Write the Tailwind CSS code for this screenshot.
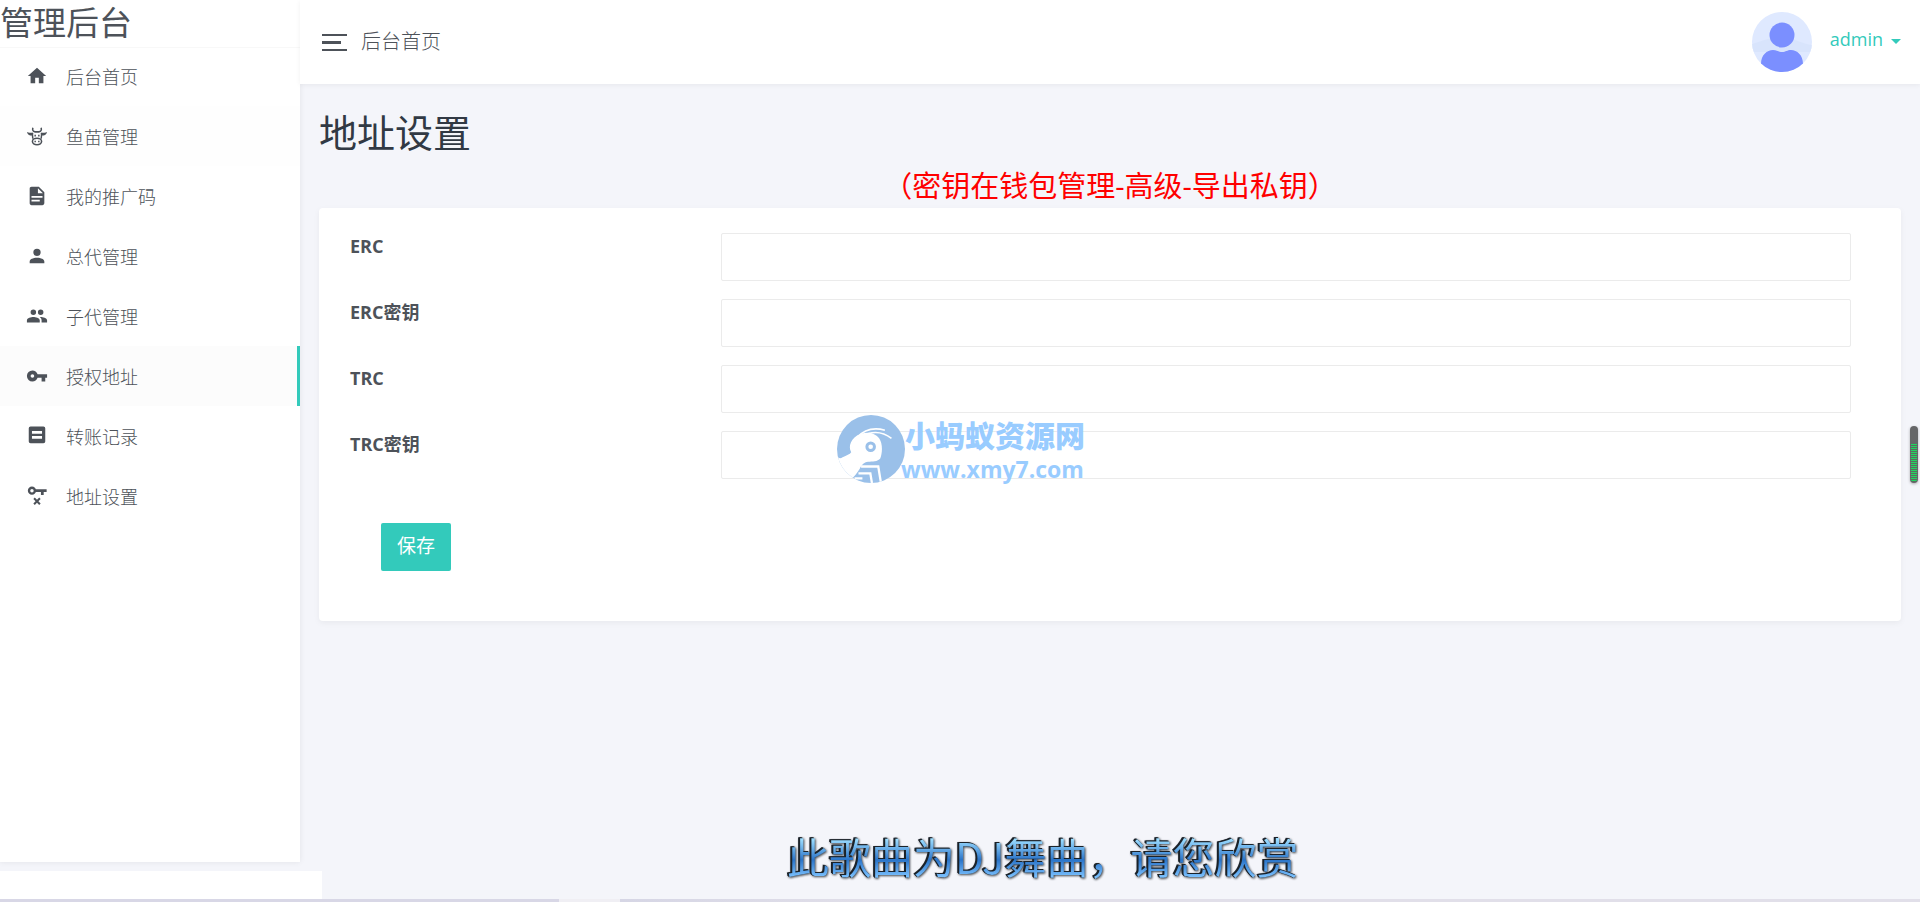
<!DOCTYPE html>
<html lang="zh-CN">
<head>
    <meta charset="UTF-8">
    <meta name="viewport" content="width=device-width, initial-scale=1.0">
    <title>地址设置 - 管理后台</title>
    <script src="https://cdn.jsdelivr.net/npm/@tailwindcss/browser@4"></script>
</head>
<body class="flex h-screen overflow-hidden bg-[#f4f5fa] font-['Open_Sans','Noto_Sans_CJK_SC',sans-serif] text-lg font-light text-[#4d5259]">

    <!-- 侧边栏 -->
    <aside class="mb-10 w-[300px] shrink-0 bg-white shadow-[0_0_6px_rgba(0,0,0,0.08)]">
        <div class="h-12 border-b border-[#f8f8f8] text-[33px] leading-[46px] font-normal">管理后台</div>
        <nav class="-mt-0.5">
            <a href="#" class="flex h-15 items-center gap-[18px] pl-[26px]">
                <svg class="size-[22px]" viewBox="0 0 24 24" fill="currentColor"><path d="M10,20V14H14V20H19V12H22L12,3L2,12H5V20H10Z"/></svg>
                <span class="pt-0.5">后台首页</span>
            </a>
            <a href="#" class="flex h-15 items-center gap-[18px] bg-[#fefefe] pl-[26px]">
                <svg class="size-[22px]" viewBox="0 0 24 24" fill="none" stroke="currentColor">
                    <path d="M7.500 3C6.800 5.500 7.500 7 10 7.500H14C16.500 7 17.200 5.500 16.500 3" stroke-width="1.700"/>
                    <path d="M1 7.500C3 8.500 5 8 7.500 8.500L6.500 11.500C3.500 11.500 1.500 10 1 7.500ZM23 7.500C21 8.500 19 8 16.500 8.500L17.500 11.500C20.500 11.500 22.500 10 23 7.500Z" fill="currentColor" stroke="none"/>
                    <path d="M7.200 8.500C6.700 11 7.200 13 7.500 15M16.800 8.500C17.300 11 16.800 13 16.500 15" stroke-width="1.600"/>
                    <ellipse cx="12" cy="18" rx="5" ry="3.500" stroke-width="1.700"/>
                    <path d="M10 10.500V12.500M14 10.500V12.500M10 17.200V18.800M14 17.200V18.800" stroke-width="1.600"/>
                </svg>
                <span class="pt-0.5">鱼苗管理</span>
            </a>
            <a href="#" class="flex h-15 items-center gap-[18px] pl-[26px]">
                <svg class="size-[22px]" viewBox="0 0 24 24" fill="currentColor"><path d="M13,9H18.5L13,3.5V9M6,2H14L20,8V20A2,2 0 0,1 18,22H6C4.89,22 4,21.1 4,20V4C4,2.89 4.89,2 6,2M15,18V16H6V18H15M18,14V12H6V14H18Z"/></svg>
                <span class="pt-0.5">我的推广码</span>
            </a>
            <a href="#" class="flex h-15 items-center gap-[18px] pl-[26px]">
                <svg class="size-[22px]" viewBox="0 0 24 24" fill="currentColor"><path d="M12,4A4,4 0 0,1 16,8A4,4 0 0,1 12,12A4,4 0 0,1 8,8A4,4 0 0,1 12,4M12,14C16.42,14 20,15.79 20,18V20H4V18C4,15.79 7.58,14 12,14Z"/></svg>
                <span class="pt-0.5">总代管理</span>
            </a>
            <a href="#" class="flex h-15 items-center gap-[18px] pl-[26px]">
                <svg class="size-[22px]" viewBox="0 0 24 24" fill="currentColor"><path d="M16,13C15.71,13 15.38,13 15.03,13.05C16.19,13.89 17,15 17,16.5V19H23V16.5C23,14.17 18.33,13 16,13M8,13C5.67,13 1,14.17 1,16.5V19H15V16.5C15,14.17 10.33,13 8,13M8,11A3,3 0 0,0 11,8A3,3 0 0,0 8,5A3,3 0 0,0 5,8A3,3 0 0,0 8,11M16,11A3,3 0 0,0 19,8A3,3 0 0,0 16,5A3,3 0 0,0 13,8A3,3 0 0,0 16,11Z"/></svg>
                <span class="pt-0.5">子代管理</span>
            </a>
            <a href="#" class="flex h-15 items-center gap-[18px] border-r-3 border-[#33cabb] bg-[#fcfcfc] pl-[26px]">
                <svg class="size-[22px]" viewBox="0 0 24 24" fill="currentColor"><path d="M7,14A2,2 0 0,1 5,12A2,2 0 0,1 7,10A2,2 0 0,1 9,12A2,2 0 0,1 7,14M12.65,10C11.83,7.67 9.61,6 7,6A6,6 0 0,0 1,12A6,6 0 0,0 7,18C9.61,18 11.83,16.33 12.65,14H17V18H21V14H23V10H12.65Z"/></svg>
                <span class="pt-0.5">授权地址</span>
            </a>
            <a href="#" class="flex h-15 items-center gap-[18px] pl-[26px]">
                <svg class="size-[22px]" viewBox="0 0 24 24" fill="currentColor" fill-rule="evenodd"><path d="M5 1.500H19A2 2 0 0 1 21 3.500V18A2 2 0 0 1 19 20H5A2 2 0 0 1 3 18V3.500A2 2 0 0 1 5 1.500ZM6.500 6.500V9.500H17.500V6.500ZM6.500 12V15H17.500V12Z"/></svg>
                <span class="pt-0.5">转账记录</span>
            </a>
            <a href="#" class="flex h-15 items-center gap-[18px] pl-[26px]">
                <svg class="size-[22px]" viewBox="0 0 24 24" fill="none" stroke="currentColor">
                    <circle cx="6.500" cy="6.200" r="3.200" stroke-width="2.600"/>
                    <path d="M10 6.200H22.500M17.800 7V11" stroke-width="3"/>
                    <path d="M8.800 14.500L15.200 21M15.200 14.500L8.800 21" stroke-width="2.200"/>
                </svg>
                <span class="pt-0.5">地址设置</span>
            </a>
        </nav>
    </aside>

    <div class="flex min-w-0 flex-1 flex-col">
        <!-- 顶部栏 -->
        <header class="flex h-[84px] shrink-0 items-center justify-between bg-white pr-[19px] pl-[22px] shadow-[0_1px_5px_rgba(0,0,0,0.06)]">
            <div class="flex items-center gap-3.5">
                <button type="button" aria-label="菜单" class="flex w-[25px] flex-col gap-[5px]">
                    <span class="h-0.5 w-full bg-[#4d5259]"></span>
                    <span class="h-[3px] w-[19px] bg-[#4d5259]"></span>
                    <span class="h-0.5 w-full bg-[#4d5259]"></span>
                </button>
                <span class="text-xl">后台首页</span>
            </div>
            <button type="button" class="flex items-center gap-[18px] font-normal text-[#33cabb]">
                <svg class="size-15" viewBox="0 0 60 60">
                    <clipPath id="avatar"><circle cx="30" cy="30" r="30"/></clipPath>
                    <g clip-path="url(#avatar)">
                        <path fill="#dfe9ff" d="M0 0H60V60H0Z"/>
                        <path fill="#d8e4fc" d="M0 32C14 28 24 23 34 25C44 27 50 32 60 33V40H0Z"/>
                        <path fill="#7b8fff" d="M9 60V52C9 43 15 38 21 38C25 38 26 40 30 40C34 40 35 38 39 38C45 38 51 43 51 52V60Z"/>
                        <circle cx="30" cy="23" r="12.500" fill="#7b8fff"/>
                    </g>
                </svg>
                <span class="flex items-center gap-2 pb-1.5">
                    admin
                    <span class="mt-1 border-x-5 border-t-5 border-x-transparent border-t-[#33cabb]"></span>
                </span>
            </button>
        </header>

        <!-- 主体内容 -->
        <main class="px-[19px] pt-6">
            <h1 class="mb-2 text-[38px] leading-12 font-normal text-[#313944]">地址设置</h1>
            <p class="text-center text-[29px] leading-11 font-normal text-[#ff0000]">（密钥在钱包管理-高级-导出私钥）</p>

            <form class="rounded-sm bg-white pt-[25px] pr-[50px] pb-[50px] pl-[31px] shadow-[0_2px_6px_rgba(0,0,0,0.05)]">
                <div class="flex flex-col gap-[18px]">
                    <div class="flex">
                        <label for="erc" class="w-[371px] leading-[26px] font-bold">ERC</label>
                        <input id="erc" type="text" class="h-12 min-w-0 flex-1 rounded-xs border border-[#ebebeb] px-4 outline-none focus:border-[#33cabb]">
                    </div>
                    <div class="flex">
                        <label for="ercKey" class="w-[371px] leading-[26px] font-bold">ERC密钥</label>
                        <input id="ercKey" type="text" class="h-12 min-w-0 flex-1 rounded-xs border border-[#ebebeb] px-4 outline-none focus:border-[#33cabb]">
                    </div>
                    <div class="flex">
                        <label for="trc" class="w-[371px] leading-[26px] font-bold">TRC</label>
                        <input id="trc" type="text" class="h-12 min-w-0 flex-1 rounded-xs border border-[#ebebeb] px-4 outline-none focus:border-[#33cabb]">
                    </div>
                    <div class="flex">
                        <label for="trcKey" class="w-[371px] leading-[26px] font-bold">TRC密钥</label>
                        <input id="trcKey" type="text" class="h-12 min-w-0 flex-1 rounded-xs border border-[#ebebeb] px-4 outline-none focus:border-[#33cabb]">
                    </div>
                </div>
                <button type="button" class="mt-11 ml-[31px] h-12 rounded-xs bg-[#33cabb] px-4 text-[19px] font-normal text-white hover:bg-[#2bb5a7]">保存</button>
            </form>
        </main>
    </div>

    <!-- 水印 -->
    <div class="pointer-events-none absolute top-[415px] left-[837px] flex items-start text-[#99ccff]">
        <svg class="size-[68px]" viewBox="51 45 206 206">
            <clipPath id="logo"><circle cx="154" cy="148" r="103"/></clipPath>
            <g clip-path="url(#logo)">
                <path fill="#9ac0e9" d="M51 45H257V251H51Z"/>
                <path fill="#fff" d="M45 160C54 178 60 178 68 173C80 168 90 164 94 158C86 144 90 126 104 113C118 101 138 97 155 100C174 106 182 116 185 130C189 146 187 164 182 177C174 187 158 186 145 187C132 189 126 196 120 208C113 220 104 230 92 243L40 260Z"/>
                <path fill="none" stroke="#fff" stroke-width="5" d="M112 113C132 91 162 82 196 91M146 101C172 94 196 100 216 116"/>
                <circle cx="153" cy="141" r="11.500" fill="#fff" stroke="#9ac0e9" stroke-width="9"/>
                <path fill="none" stroke="#fff" stroke-width="7" d="M124 201H176L184 250M116 222H152L157 252M104 237H128"/>
            </g>
        </svg>
        <div class="-ml-1 font-bold whitespace-nowrap">
            <div class="pl-1 text-[30px] leading-[42px] font-black">小蚂蚁资源网</div>
            <div class="text-[23px] leading-6">www.xmy7.com</div>
        </div>
    </div>

    <!-- 歌词 -->
    <div class="pointer-events-none absolute bottom-4 left-[787px] bg-linear-to-b from-[#9bdcff] from-20% via-[#2a74c8] via-55% to-[#7cc2ff] to-85% bg-clip-text text-[42px] leading-[56px] font-normal whitespace-nowrap text-transparent [filter:drop-shadow(-1px_-1px_0_#1b2229)_drop-shadow(-1px_0_0_#1b2229)_drop-shadow(1px_1px_1px_#40464d)]">
        <span class="font-['Noto_Sans_CJK_SC',sans-serif]">此歌曲为DJ舞曲，请您欣赏</span>
    </div>

    <!-- 音量条 -->
    <div class="absolute top-[426px] right-0.5 flex h-[57px] w-2 items-end rounded-full bg-[#656668] p-px shadow-[0_1px_3px_rgba(0,0,0,0.3)]">
        <div class="h-[38px] w-full rounded-b-full bg-[repeating-linear-gradient(to_bottom,#1fd760_0_1px,#5b6a60_1px_2px)]"></div>
    </div>

    <!-- 底部条 -->
    <div class="absolute bottom-0 left-0 h-[31px] w-[322px] bg-white"></div>
    <div class="absolute inset-x-0 bottom-0 flex h-[3px]">
        <div class="w-[559px] bg-[#d8d7e6]"></div>
        <div class="w-[61px] bg-[#f0eff4]"></div>
        <div class="flex-1 bg-linear-to-r from-[#d6d6e5] to-[#e1dfe9] to-20%"></div>
    </div>
</body>
</html>
